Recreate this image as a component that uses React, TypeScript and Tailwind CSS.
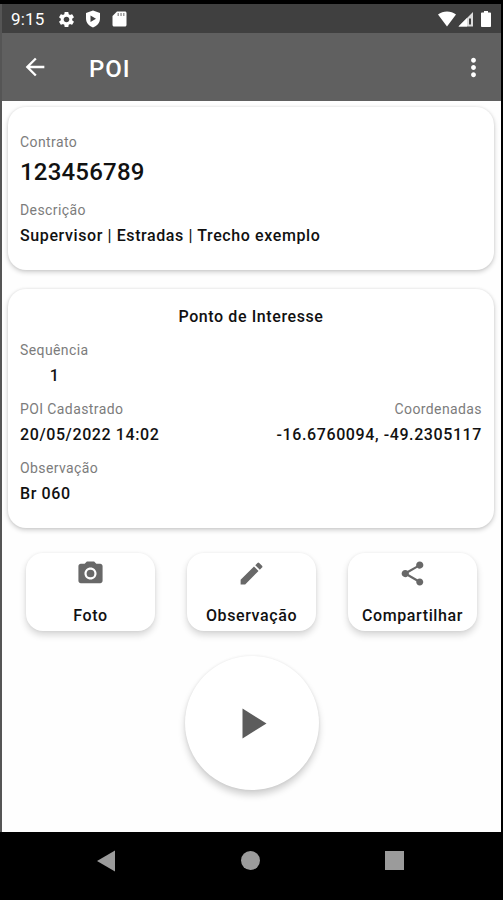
import type { ReactNode } from 'react'
import {
  MdArrowBack,
  MdEdit,
  MdMoreVert,
  MdPhotoCamera,
  MdSettings,
  MdShare,
} from 'react-icons/md'

function StatusBar() {
  return (
    <div className="flex h-[29px] items-center bg-[#404040] pt-px pr-[10px] pl-[9px] text-white">
      <span className="w-[46px] text-[17px] leading-[29px] tracking-[0.2px]">9:15</span>
      <MdSettings className="h-[19px] w-[19px]" />
      <svg className="ml-[9px] h-[18px] w-[16px]" viewBox="0 0 16 18" fill="currentColor">
        <path fillRule="evenodd" d="M8 .5 15 3v5.5c0 4-2.8 7.6-7 8.9-4.2-1.3-7-4.9-7-8.9V3L8 .5Zm-2.5 5v6.5L11 8.7 5.5 5.500Z" />
      </svg>
      <svg className="ml-[11px] h-4 w-[15px]" viewBox="0 0 15 16">
        <path d="M5 .5h8c.8 0 1.500.7 1.500 1.500v12c0 .8-.7 1.500-1.500 1.500H2c-.8 0-1.500-.7-1.500-1.500V5L5 .5Z" fill="#fff" />
        <path d="M5.500 2h1.500v3H5.500zM8.300 2h1.500v3H8.300zM11 2h1.500v3H11z" fill="#9a9a9a" />
      </svg>
      <div className="ml-auto flex items-center">
        <svg className="h-4 w-[18px]" viewBox="0 0 18 16" fill="currentColor">
          <path d="M0 3.500C5 -.5 13 -.5 18 3.500L9 15.500Z" />
        </svg>
        <svg className="ml-[2px] h-4 w-4" viewBox="0 0 16 16">
          <path d="M15 1v14.500H.5L15 1Z" fill="#dcdcdc" />
          <path d="M9 7v8.500H.5L9 7Z" fill="#fff" />
          <path d="M11 7.500h2v6h-2z" fill="#404040" />
        </svg>
        <svg className="ml-[7px] h-4 w-[10px]" viewBox="0 0 10 16" fill="currentColor">
          <path d="M3 0h4v1.500h2.200c.5 0 .8.3.8.8v12.900c0 .5-.3.800-.8.800H.8c-.5 0-.8-.3-.8-.8V2.300c0-.5.3-.8.8-.8H3V0Z" />
        </svg>
      </div>
    </div>
  )
}

function AppBar() {
  return (
    <header className="flex h-[68px] items-center bg-[#606060] pr-[13px] pl-[19px] text-white">
      <MdArrowBack className="h-7 w-7" />
      <h1 className="mt-[3px] ml-[40px] text-[24px] font-medium tracking-[0.9px]">POI</h1>
      <MdMoreVert className="mt-px ml-auto h-[29px] w-[29px]" />
    </header>
  )
}

function Card({ className, children }: { className: string; children: ReactNode }) {
  return (
    <section
      className={`mr-[7px] ml-[6px] rounded-[18px] bg-white px-3 shadow-[0_2px_5px_rgba(0,0,0,0.2),0_0_3px_rgba(0,0,0,0.08)] ${className}`}
    >
      {children}
    </section>
  )
}

function Label({ children }: { children: ReactNode }) {
  return <p className="text-[14px] leading-[20px] tracking-[0.4px] text-[#7c7c7c]">{children}</p>
}

function Value({ children }: { children: ReactNode }) {
  return <p className="mt-1 text-[16px] leading-[24px] font-medium tracking-[0.6px] text-[#111]">{children}</p>
}

const actions = [
  { icon: MdPhotoCamera, text: 'Foto' },
  { icon: MdEdit, text: 'Observação' },
  { icon: MdShare, text: 'Compartilhar' },
]

export default function App() {
  return (
    <div className="flex h-[900px] w-[503px] flex-col bg-black pt-1 font-[Roboto,sans-serif]">
      <div className="flex h-[828px] flex-col border-r-2 border-l-2 border-r-black border-l-[#555]">
        <StatusBar />
        <AppBar />
        <main className="flex flex-1 flex-col bg-[#fefefe] pt-[6px]">
          <Card className="h-[163px] pt-[25px]">
            <Label>Contrato</Label>
            <p className="text-[24px] leading-[40px] font-medium tracking-[0.2px] text-[#111]">123456789</p>
            <div className="mt-[8px]">
              <Label>Descrição</Label>
              <Value>Supervisor | Estradas | Trecho exemplo</Value>
            </div>
          </Card>

          <Card className="mt-[19px] h-[239px] pt-[16px]">
            <h2 className="text-center text-[16px] leading-[24px] font-medium tracking-[0.6px] text-[#111]">
              Ponto de Interesse
            </h2>
            <div className="mt-[11px] w-[69px]">
              <Label>Sequência</Label>
              <div className="text-center">
                <Value>1</Value>
              </div>
            </div>
            <div className="mt-[11px] flex justify-between">
              <div>
                <Label>POI Cadastrado</Label>
                <Value>20/05/2022 14:02</Value>
              </div>
              <div className="text-right">
                <Label>Coordenadas</Label>
                <Value>-16.6760094, -49.2305117</Value>
              </div>
            </div>
            <div className="mt-[11px]">
              <Label>Observação</Label>
              <Value>Br 060</Value>
            </div>
          </Card>

          <div className="mt-[25px] flex justify-between pr-[24px] pl-[24px]">
            {actions.map((action) => (
              <button
                key={action.text}
                className="flex h-[78px] w-[129px] flex-col items-center rounded-[17px] bg-white pt-[6px] shadow-[0_4px_7px_rgba(0,0,0,0.16),0_0_3px_rgba(0,0,0,0.06)]"
              >
                <action.icon className="h-[29px] w-[29px] text-[#686868]" />
                <span className="mt-[16px] text-[16px] leading-[24px] font-medium tracking-[0.6px] text-[#111]">
                  {action.text}
                </span>
              </button>
            ))}
          </div>

          <button className="mt-[25px] flex h-[134px] w-[134px] items-center justify-center self-center rounded-full bg-white shadow-[0_5px_7px_rgba(0,0,0,0.18),0_0_3px_rgba(0,0,0,0.08)]">
            <svg className="ml-[5px] h-[31px] w-[25px]" viewBox="0 0 25 31">
              <path d="M.5.500 24.500 15.500.5 30.500Z" fill="#5c5c5c" />
            </svg>
          </button>
        </main>
      </div>

      <nav className="flex h-[68px] items-start justify-between pt-[18px] pr-[99px] pl-[97px]">
        <svg className="h-[22px] w-[18px]" viewBox="0 0 18 22" fill="#9b9b9b">
          <path d="M18 .5v21L0 11Z" />
        </svg>
        <div className="mt-px ml-px h-[19px] w-[19px] rounded-full bg-[#9b9b9b]" />
        <div className="mt-px h-[19px] w-[19px] bg-[#9b9b9b]" />
      </nav>
    </div>
  )
}
